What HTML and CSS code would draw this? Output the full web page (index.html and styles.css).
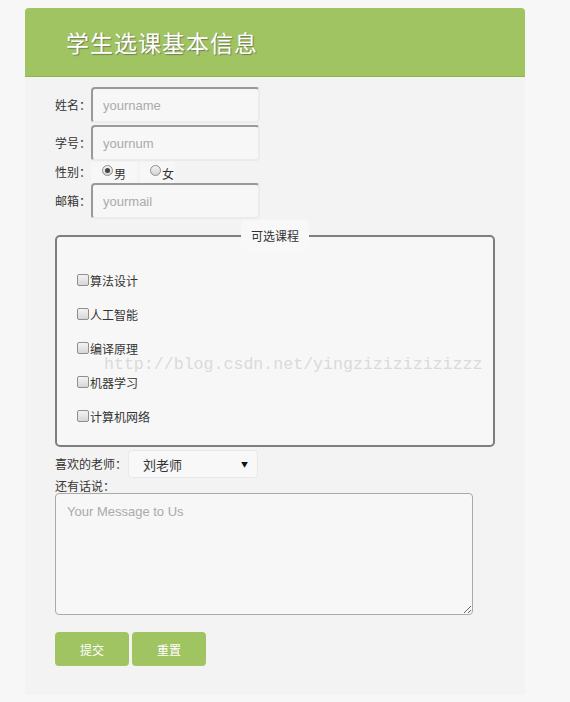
FILE: index.html
```html
<!DOCTYPE html>
<html lang="zh">
<head>
<meta charset="utf-8">
<title>学生选课基本信息</title>
<link rel="stylesheet" href="styles.css">
</head>
<body>
<div class="card">
  <div class="header"><h1 class="title">学生选课基本信息</h1></div>
  <form class="form">
    <div class="row">
      <label class="lbl">姓名：</label>
      <input class="txt" type="text" placeholder="yourname">
    </div>
    <div class="row">
      <label class="lbl">学号：</label>
      <input class="txt" type="text" placeholder="yournum">
    </div>
    <div class="row radio-row">
      <label class="lbl">性别：</label>
      <span class="opt opt-first"><span class="radio checked"></span>男</span>
      <span class="opt opt-second"><span class="radio"></span>女</span>
    </div>
    <div class="row">
      <label class="lbl">邮箱：</label>
      <input class="txt" type="text" placeholder="yourmail">
    </div>
    <fieldset class="courses">
      <legend class="legend">可选课程</legend>
      <div class="course"><span class="check"></span>算法设计</div>
      <div class="course"><span class="check"></span>人工智能</div>
      <div class="course"><span class="check"></span>编译原理</div>
      <div class="course"><span class="check"></span>机器学习</div>
      <div class="course"><span class="check"></span>计算机网络</div>
      <div class="watermark">http://blog.csdn.net/yingzizizizizizzz</div>
    </fieldset>
    <div class="sel-row">
      <label class="lbl">喜欢的老师：</label>
      <div class="select"><span>刘老师</span><span class="arrow">▼</span></div>
    </div>
    <div class="msg-lbl">还有话说：</div>
    <textarea class="msg" placeholder="Your Message to Us"></textarea>
    <div class="btns">
      <button type="button" class="btn">提交</button>
      <button type="button" class="btn">重置</button>
    </div>
  </form>
</div>
</body>
</html>
```

FILE: styles.css
```css
html, body {
  margin: 0;
  padding: 0;
  background: #f7f7f7;
}
body {
  padding-top: 8px;
  font-family: "Noto Sans CJK SC", "Liberation Sans", sans-serif;
  font-size: 12px;
  color: #333;
}
.card {
  width: 500px;
  margin-left: 25px;
  background: #f3f3f3;
  border-radius: 4px;
}
.header {
  height: 68px;
  background: #a0c462;
  border-bottom: 1px solid #8cb54e;
  border-radius: 4px 4px 0 0;
  display: flex;
  align-items: center;
  padding-left: 41px;
}
.title {
  margin: 0;
  font-family: "Noto Sans CJK SC", sans-serif;
  font-weight: normal;
  font-size: 23px;
  line-height: 1;
  color: #fff;
  letter-spacing: 1px;
  text-shadow: 1px 1px 1px rgba(80, 80, 80, 0.6);
}
.form {
  padding: 9px 30px 29px 30px;
  position: relative;
}
.row {
  display: flex;
  align-items: center;
  height: 38px;
}
.lbl {
  font-size: 12px;
  line-height: 14px;
  color: #333;
  white-space: nowrap;
}
.txt {
  box-sizing: border-box;
  width: 169px;
  height: 36px;
  margin: 1px 0 1px 0;
  padding: 0 10px;
  border: 2px solid;
  border-color: #9a9a9a #ebebeb #ebebeb #9a9a9a;
  border-radius: 4px;
  background: #f7f7f7;
  font-family: "Liberation Sans", Arial, sans-serif;
  font-size: 13px;
  color: #333;
  outline: none;
}
.txt::placeholder {
  color: #aaa;
}
.radio-row {
  height: 20px;
  margin-top: 0;
}
.opt {
  display: flex;
  align-items: center;
  height: 21px;
  background: #f7f7f7;
  border-radius: 3px;
  font-size: 12px;
  color: #333;
  padding-top: 2px;
  box-sizing: border-box;
}
.opt-first {
  padding-left: 11px;
  padding-right: 11px;
}
.opt-second {
  margin-left: 3px;
  padding-left: 10px;
  padding-right: 1px;
}
.radio {
  box-sizing: border-box;
  width: 11px;
  height: 11px;
  border-radius: 50%;
  border: 1px solid #8f8f8f;
  background: linear-gradient(#f2f2f2, #d4d4d4);
  margin-right: 1px;
  margin-top: -5px;
  position: relative;
}
.radio.checked::after {
  content: "";
  position: absolute;
  left: 2px;
  top: 2px;
  width: 5px;
  height: 5px;
  border-radius: 50%;
  background: #444;
}
.courses {
  position: relative;
  margin: 0;
  padding: 20px 20px 21px 20px;
  border: 2px solid #7e7e7e;
  border-radius: 5px;
  background: #f7f7f7;
  display: flex;
  flex-direction: column;
  gap: 18px;
}
.legend {
  margin: 0 auto;
  padding: 0 10px;
  height: 32px;
  line-height: 32px;
  font-size: 12px;
  color: #333;
  background: #f8f8f8;
  border-radius: 4px;
}
.course {
  display: flex;
  align-items: center;
  height: 16px;
  font-size: 12px;
  color: #333;
}
.check {
  box-sizing: border-box;
  width: 12px;
  height: 12px;
  border: 1px solid #8f8f8f;
  border-radius: 2px;
  background: linear-gradient(#f4f4f4, #d6d6d6);
  margin-right: 1px;
}
.watermark {
  position: absolute;
  left: 47px;
  top: 105px;
  font-family: "Liberation Mono", "Courier New", monospace;
  font-size: 16.6px;
  line-height: 16px;
  color: #dadada;
  white-space: nowrap;
  pointer-events: none;
}
.sel-row {
  display: flex;
  align-items: center;
  margin-top: 3px;
}
.select {
  box-sizing: border-box;
  width: 130px;
  height: 28px;
  margin-left: 1px;
  display: flex;
  align-items: center;
  justify-content: space-between;
  padding: 0 9px 0 14px;
  background: #f8f8f8;
  border: 1px solid #e8e8e8;
  border-radius: 4px;
  font-size: 13px;
  color: #333;
}
.arrow {
  font-size: 7px;
  color: #111;
}
.msg-lbl {
  height: 15px;
  line-height: 15px;
  font-size: 12px;
  color: #333;
}
.msg {
  display: block;
  box-sizing: border-box;
  width: 418px;
  height: 122px;
  margin: 0;
  padding: 10px 11px;
  border: 1px solid #aaa;
  border-radius: 4px;
  background: #f7f7f7;
  font-family: "Liberation Sans", Arial, sans-serif;
  font-size: 13px;
  color: #333;
  resize: both;
  outline: none;
}
.msg::placeholder {
  color: #aaa;
}
.btns {
  display: flex;
  gap: 3px;
  margin-top: 17px;
}
.btn {
  width: 74px;
  height: 34px;
  border: none;
  border-radius: 4px;
  background: #a0c462;
  color: #fff;
  font-family: "Noto Sans CJK SC", sans-serif;
  font-size: 12px;
  padding: 0;
}
```
